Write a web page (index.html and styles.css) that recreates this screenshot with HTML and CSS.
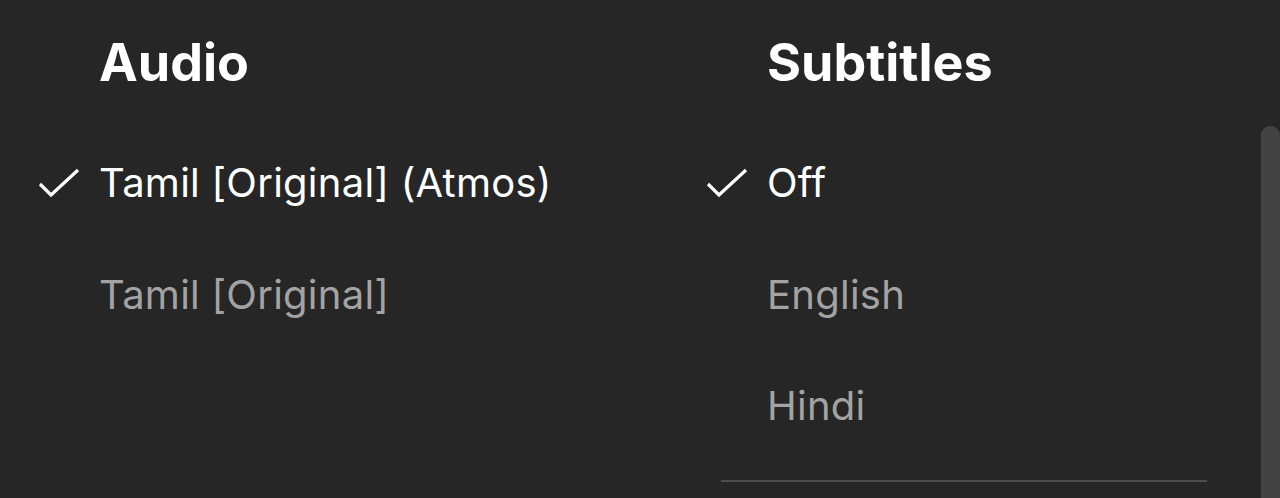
FILE: index.html
```html
<!DOCTYPE html>
<html>
<head>
<meta charset="utf-8">
<link rel="stylesheet" href="styles.css">
</head>
<body>
<div class="panel">
  <div class="col col-audio">
    <h2 class="title">Audio</h2>
    <ul class="list">
      <li class="item selected"><svg class="check" viewBox="0 0 42 30"><path d="M2 16 L13 27 L40 2" fill="none" stroke="#fff" stroke-width="3.2"/></svg><span>Tamil [Original] (Atmos)</span></li>
      <li class="item"><span>Tamil [Original]</span></li>
    </ul>
  </div>
  <div class="col col-subs">
    <h2 class="title">Subtitles</h2>
    <ul class="list">
      <li class="item selected"><svg class="check" viewBox="0 0 42 30"><path d="M2 16 L13 27 L40 2" fill="none" stroke="#fff" stroke-width="3.2"/></svg><span>Off</span></li>
      <li class="item"><span>English</span></li>
      <li class="item"><span>Hindi</span></li>
    </ul>
    <div class="divider"></div>
  </div>
  <div class="scrollbar"><div class="thumb"></div></div>
</div>
</body>
</html>
```

FILE: styles.css
```css
html, body {
  margin: 0;
  padding: 0;
  background: #262626;
  height: 498px;
  overflow: hidden;
}
.panel {
  display: flex;
  height: 498px;
  font-family: Inter, "Noto Sans", sans-serif;
}
.col {
  display: flex;
  flex-direction: column;
}
.col-audio {
  width: 668px;
}
.col-subs {
  width: 593px;
}
.title {
  margin: 0;
  padding-left: 99px;
  padding-top: 33px;
  height: 60px;
  line-height: 60px;
  font-size: 52px;
  font-weight: 700;
  color: #fff;
}
.list {
  list-style: none;
  margin: 0;
  padding: 0;
  margin-top: 70px;
}
.item {
  position: relative;
  height: 111.5px;
  line-height: 40px;
  padding-left: 99px;
  font-size: 40px;
  letter-spacing: 0.25px;
  color: #a3a3a3;
  display: flex;
  align-items: flex-start;
}
.item.selected {
  color: #fff;
}
.check {
  position: absolute;
  left: 38px;
  top: 5px;
  width: 42px;
  height: 30px;
}
.divider {
  margin: -18px 54px 0 53px;
  height: 2px;
  background: #4d4d4d;
}
.scrollbar {
  width: 19px;
  padding-top: 126px;
  display: flex;
}
.thumb {
  flex: 1;
  background: #434343;
  border-radius: 9px 9px 0 0;
}
```
